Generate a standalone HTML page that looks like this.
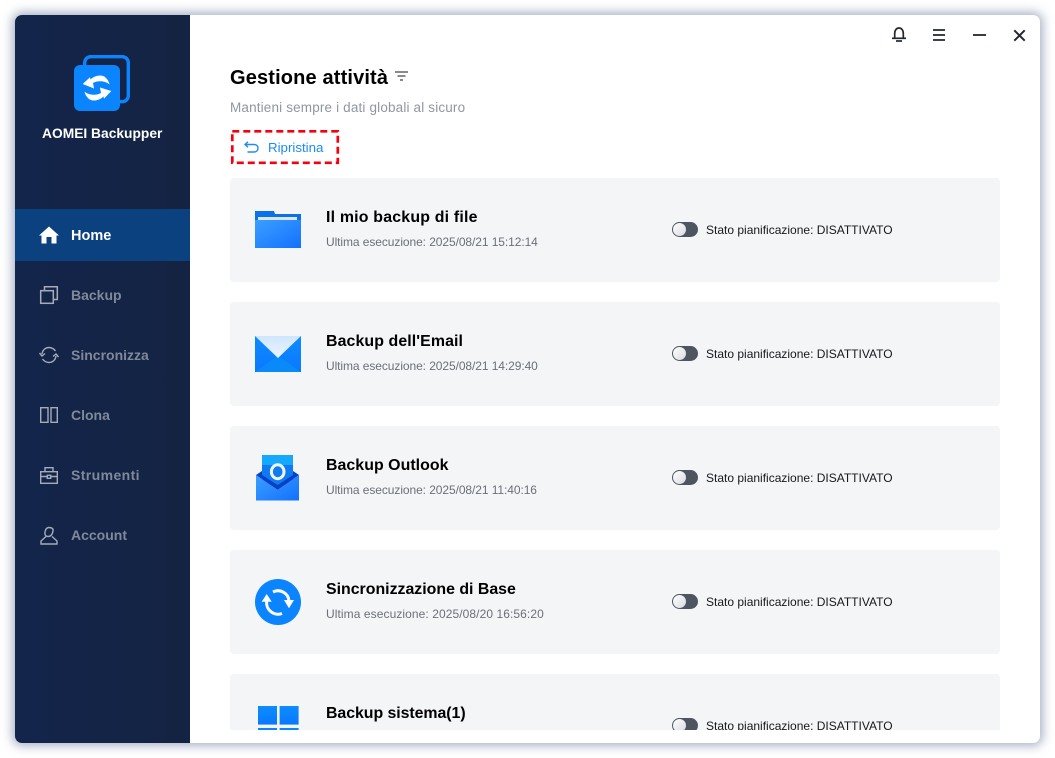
<!DOCTYPE html>
<html><head><meta charset="utf-8">
<style>
html,body{margin:0;padding:0;width:1055px;height:758px;overflow:hidden;background:#fff;font-family:"Liberation Sans",sans-serif}
.win{position:absolute;left:15px;top:15px;width:1025px;height:728px;border-radius:7px;background:#fff;box-shadow:0 0 10px 3px rgba(120,132,165,.62);overflow:hidden}
.side{position:absolute;left:15px;top:15px;width:175px;height:728px;background:linear-gradient(90deg,#13254b,#152342);border-radius:7px 0 0 7px}
.t{position:absolute;white-space:nowrap}
.active{position:absolute;left:15px;top:209px;width:175px;height:52px;background:#0c4180}
.nav{font-size:14px;font-weight:bold;color:#808998;left:71px}
.card{position:absolute;left:230px;width:770px;height:104px;background:#f4f5f7;border-radius:4px}
.h{font-size:15.9px;font-weight:bold;color:#000}
.s{font-size:12px;color:#6b7078;letter-spacing:-.08px}
.st{font-size:12px;color:#16181c}
.tg{position:absolute;width:26px;height:15px;border-radius:8px;background:#4f5461}
.tg:after{content:"";position:absolute;left:1px;top:1px;width:13px;height:13px;border-radius:50%;background:linear-gradient(135deg,#fff,#d8dade)}
svg{position:absolute;overflow:visible}
</style></head><body>
<div class="win"></div>
<div class="side"></div>
<div class="active"></div>

<svg style="left:70px;top:50px" width="64" height="64" viewBox="0 0 64 64">
<rect x="14.7" y="6.7" width="43.6" height="45" rx="6" fill="none" stroke="#0a84ff" stroke-width="3.4"/>
<rect x="4" y="15" width="46" height="46" rx="6" fill="#0a84ff"/>
<path d="M12.7 34 L20 27.3 L20.5 29.5 C25 25 33 24 36 28 C38 30 39 32 39.5 34.5 C36 31 28 30 23 33 L24 38.5 Z" fill="#fff"/>
<path d="M41.3 41 L34 48.7 L33.5 46.5 C29 51 21 52 18 48 C16 46 15 44 14.5 41.5 C18 45 26 46 31 43 L30 37.5 Z" fill="#fff"/>
</svg>
<div class="t" style="left:42px;top:126px;font-size:13.8px;font-weight:bold;color:#fff">AOMEI Backupper</div>

<svg style="left:39px;top:226px" width="20" height="18" viewBox="0 0 20 18"><path d="M10 0.5 L20 9.5 L17.5 9.5 L17.5 17.5 L12.5 17.5 L12.5 11 L7.5 11 L7.5 17.5 L2.5 17.5 L2.5 9.5 L0 9.5 Z" fill="#fff"/></svg>
<div class="t nav" style="top:228px;color:#fff;font-size:14.5px">Home</div>

<svg style="left:40px;top:286px" width="18" height="18" viewBox="0 0 18 18" fill="none" stroke="#a5acb8" stroke-width="1.5"><rect x=".7" y="4.7" width="12.6" height="12.6"/><path d="M4.5 4.5 V.7 H17.3 V13.5 H13.5"/></svg>
<div class="t nav" style="top:287px">Backup</div>

<svg style="left:39px;top:346px" width="20" height="18" viewBox="0 0 20 18" fill="none" stroke="#a5acb8" stroke-width="1.4"><path d="M3 8 C3.5 4 6.5 1.5 10 1.5 C13 1.5 15 3 16.5 5"/><path d="M17 10 C16.5 14 13.5 16.5 10 16.5 C7 16.5 5 15 3.5 13"/><path d="M0.5 7 L3 10 L6 7.5" /><path d="M19.5 11 L17 8 L14 10.5"/></svg>
<div class="t nav" style="top:347px">Sincronizza</div>

<svg style="left:40px;top:407px" width="18" height="16" viewBox="0 0 18 16" fill="none" stroke="#a5acb8" stroke-width="1.4"><path d="M.7 .7 H8 V15.3 H.7 Z"/><path d="M11 .7 H17.3 V15.3 H11 Z"/></svg>
<div class="t nav" style="top:407px">Clona</div>

<svg style="left:40px;top:467px" width="18" height="17" viewBox="0 0 18 17" fill="none" stroke="#a5acb8" stroke-width="1.4"><rect x=".7" y="4.7" width="16.6" height="11.6"/><path d="M5 4.5 V.7 H13 V4.5"/><path d="M.7 9.5 H7 M11 9.5 H17.3"/><rect x="7.3" y="8.3" width="3.4" height="3" /></svg>
<div class="t nav" style="top:467px;letter-spacing:.4px">Strumenti</div>

<svg style="left:40px;top:526px" width="18" height="19" viewBox="0 0 18 19" fill="none" stroke="#a5acb8" stroke-width="1.4"><path d="M9 1.5 C12 1.5 13.5 2.8 13 5 C12.5 8 11 10.5 8 10.5 C5.5 10.5 4.5 8.5 5 6 C5.5 3 6.5 1.5 9 1.5 Z"/><path d="M6 10.5 L1 15 V18 H17 V15 L12 10.5"/></svg>
<div class="t nav" style="top:527px">Account</div>

<svg style="left:892px;top:26px" width="14" height="16" viewBox="0 0 14 16" fill="none" stroke="#23272e" stroke-width="1.7"><path d="M2.7 12 V7.5 C2.7 4 4.7 2 7 2 C9.3 2 11.3 4 11.3 7.5 V12"/><path d="M0 12.3 H14"/><path d="M4 15 H10"/></svg>
<svg style="left:933px;top:28.5px" width="12" height="12" viewBox="0 0 12 12" stroke="#23272e" stroke-width="1.8"><path d="M0 1 H12 M0 6 H12 M0 11 H12"/></svg>
<svg style="left:973px;top:34px" width="13" height="2" viewBox="0 0 13 2" stroke="#23272e" stroke-width="1.8"><path d="M0 1 H13"/></svg>
<svg style="left:1014px;top:30px" width="11" height="11" viewBox="0 0 11 11" stroke="#23272e" stroke-width="2"><path d="M.3 .3 L10.7 10.7 M10.7 .3 L.3 10.7"/></svg>

<div class="t" style="left:230px;top:67px;font-size:20px;font-weight:bold;color:#000;letter-spacing:.15px">Gestione attività</div>
<svg style="left:395px;top:71px" width="13" height="10" viewBox="0 0 13 10" stroke="#444" stroke-width="1.3"><path d="M0 1 H13 M2.5 5 H10.5 M5 9 H8"/></svg>
<div class="t" style="left:230px;top:100px;font-size:13.5px;color:#8f96a2;letter-spacing:.16px">Mantieni sempre i dati globali al sicuro</div>

<svg style="left:230px;top:129px" width="110" height="36" viewBox="0 0 110 36"><rect x="2.3" y="2.3" width="105.5" height="31.5" fill="none" stroke="#f5000f" stroke-width="2.7" stroke-dasharray="7 4"/></svg>
<svg style="left:244px;top:141px" width="16" height="12" viewBox="0 0 16 12" fill="none" stroke="#1f8bf5" stroke-width="1.4"><path d="M1 3.5 H10 C12.5 3.5 14 5 14 7 C14 9.5 12.5 11 10 11 H3.5"/><path d="M4 .8 L1 3.5 L4 6.2"/></svg>
<div class="t" style="left:268px;top:140px;font-size:13.3px;color:#1b8af5">Ripristina</div>

<div style="position:absolute;left:230px;top:178px;width:770px;height:552px;overflow:hidden">
<div class="card" style="left:0;top:0"></div>
<div class="card" style="left:0;top:124px"></div>
<div class="card" style="left:0;top:248px"></div>
<div class="card" style="left:0;top:372px"></div>
<div class="card" style="left:0;top:496px"></div>

<svg style="left:25px;top:33px" width="46" height="38" viewBox="0 0 46 38">
<defs><linearGradient id="a" x1="0" y1="0" x2="1" y2="1"><stop offset="0" stop-color="#3aa0ff"/><stop offset="1" stop-color="#1470ff"/></linearGradient>
<linearGradient id="b" x1="0" y1="0" x2="0" y2="1"><stop offset="0" stop-color="#cfe6ff"/><stop offset="1" stop-color="#eaf4ff"/></linearGradient>
<linearGradient id="c" x1="0" y1="0" x2="0" y2="1"><stop offset="0" stop-color="#0d8cff"/><stop offset="1" stop-color="#0a78ff"/></linearGradient></defs>
<path d="M0 0 H19 L20 3 H46 V12 H0 Z" fill="#0a72e8"/>
<rect x="3" y="6" width="39" height="4" fill="#dbe6fa"/>
<rect x="0" y="9" width="46" height="28" fill="url(#a)"/>
</svg>

<svg style="left:25px;top:158px" width="46" height="36" viewBox="0 0 46 36">
<rect width="46" height="36" fill="url(#c)"/>
<path d="M0 36 L23 20 L46 36 Z" fill="#0a8af8"/>
<path d="M0 0 H46 L23 22 Z" fill="url(#b)"/>
</svg>

<svg style="left:26px;top:277px" width="44" height="46" viewBox="0 0 44 46">
<rect x="6" y="0" width="31" height="30" fill="#0f7bf0"/>
<rect x="6" y="0" width="31" height="10" fill="#15a8ff"/>
<path d="M0 20 L6 16 V20 L21.7 30 L37 20 V16 L43 20 L21.7 35 Z" fill="#0a3fc8"/>
<ellipse cx="21.7" cy="16.7" rx="6.3" ry="7" fill="none" stroke="#eef5ff" stroke-width="3"/>
<path d="M0 20 L21.7 35 L43 20 V45.5 H0 Z" fill="url(#a)"/>
</svg>

<svg style="left:25px;top:401px" width="46" height="46" viewBox="0 0 46 46">
<circle cx="23" cy="23" r="23" fill="#0a84ff"/>
<g fill="none" stroke="#fff" stroke-width="3"><path d="M18 13 A11 11 0 0 1 34 22"/><path d="M11.7 22 A11.5 11.5 0 0 0 27 34.5"/></g>
<path d="M11.7 15 L6.7 22.7 H16.7 Z" fill="#fff"/><path d="M34 29.3 L29 21 H39 Z" fill="#fff"/>
</svg>

<svg style="left:27.7px;top:527.7px" width="41" height="42" viewBox="0 0 41 42">
<rect x="0" y="0" width="19" height="18.6" fill="url(#c)"/><rect x="21.6" y="0" width="19" height="18.6" fill="url(#c)"/>
<rect x="0" y="22" width="19" height="19" fill="#0a84ff"/><rect x="21.6" y="22" width="19" height="19" fill="#0a84ff"/>
</svg>

<div class="tg" style="left:442px;top:44px"></div>
<div class="tg" style="left:442px;top:168px"></div>
<div class="tg" style="left:442px;top:292px"></div>
<div class="tg" style="left:442px;top:416px"></div>
<div class="tg" style="left:442px;top:540px"></div>

<div class="t h" style="left:96px;top:31px;letter-spacing:.2px">Il mio backup di file</div>
<div class="t s" style="left:96px;top:57px">Ultima esecuzione: 2025/08/21 15:12:14</div>
<div class="t st" style="left:476px;top:45px">Stato pianificazione: DISATTIVATO</div>

<div class="t h" style="left:96px;top:155px;letter-spacing:.1px">Backup dell'Email</div>
<div class="t s" style="left:96px;top:181px">Ultima esecuzione: 2025/08/21 14:29:40</div>
<div class="t st" style="left:476px;top:169px">Stato pianificazione: DISATTIVATO</div>

<div class="t h" style="left:96px;top:279px;letter-spacing:.05px">Backup Outlook</div>
<div class="t s" style="left:96px;top:305px">Ultima esecuzione: 2025/08/21 11:40:16</div>
<div class="t st" style="left:476px;top:293px">Stato pianificazione: DISATTIVATO</div>

<div class="t h" style="left:96px;top:403px">Sincronizzazione di Base</div>
<div class="t s" style="left:96px;top:429px;letter-spacing:.08px">Ultima esecuzione: 2025/08/20 16:56:20</div>
<div class="t st" style="left:476px;top:417px">Stato pianificazione: DISATTIVATO</div>

<div class="t h" style="left:96px;top:527px;letter-spacing:-.05px">Backup sistema(1)</div>
<div class="t st" style="left:476px;top:541px">Stato pianificazione: DISATTIVATO</div>
</div>
</body></html>
